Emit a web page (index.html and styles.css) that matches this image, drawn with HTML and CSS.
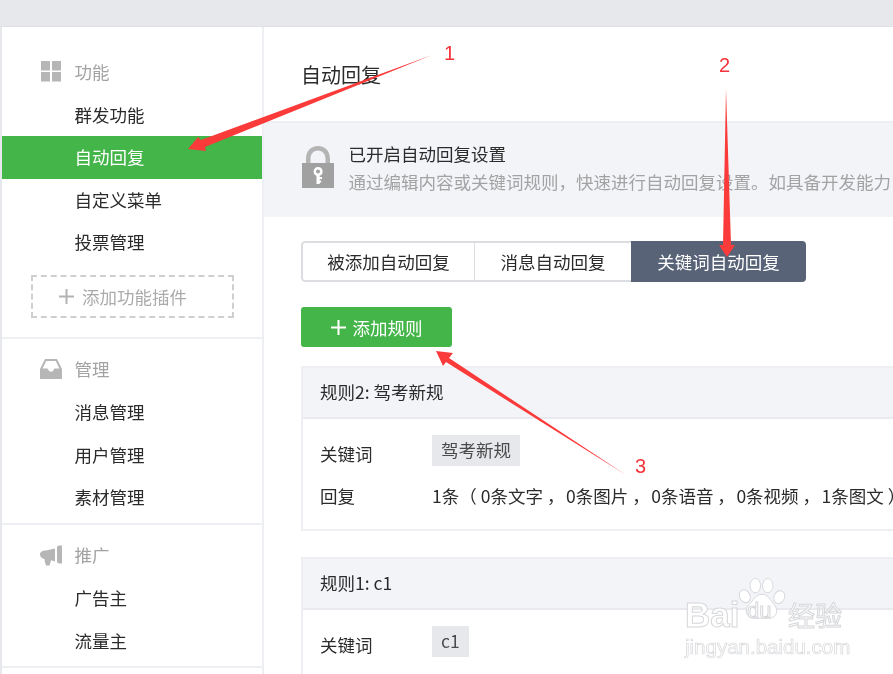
FILE: index.html
```html
<!DOCTYPE html>
<html lang="zh-CN">
<head>
<meta charset="utf-8">
<title>自动回复</title>
<link rel="stylesheet" href="styles.css">
</head>
<body>
<div class="page">
  <div class="topbar"></div>
  <div class="layout">
    <nav class="sidebar">
      <section class="group group-first">
        <div class="group-title">
          <svg class="group-icon" viewBox="0 0 22 22"><path d="M1 1h9v9.500H1zM12 1h9v9.500h-9zM1 12h9v9.500H1zM12 12h9v9.500h-9z"/></svg>
          <span>功能</span>
        </div>
        <a class="item">群发功能</a>
        <a class="item item-active">自动回复</a>
        <a class="item">自定义菜单</a>
        <a class="item">投票管理</a>
        <div class="add-plugin">
          <svg class="add-plus" viewBox="0 0 15 15"><path d="M6.500 0h2v6.500H15v2H8.500V15h-2V8.500H0v-2h6.500z"/></svg>
          <span>添加功能插件</span>
        </div>
      </section>
      <section class="group">
        <div class="group-title">
          <svg class="group-icon" viewBox="0 0 22 22"><path d="M5 1h12l5 10v10H0V11zM6.200 3L2.600 10.500H7.500l2 3h3l2-3h4.900L15.800 3z" fill-rule="evenodd"/></svg>
          <span>管理</span>
        </div>
        <a class="item">消息管理</a>
        <a class="item">用户管理</a>
        <a class="item">素材管理</a>
      </section>
      <section class="group">
        <div class="group-title">
          <svg class="group-icon" viewBox="0 0 22 22"><path d="M17 3.500c0-1.200 1-2 2.500-2h2.500v18h-2.500c-1.500 0-2.500-.8-2.500-2zM15 4.500v13l-4-1.300c-.5 2-1 3.500-1.500 5.300H6c-.8-2-1.200-4-1.500-6.500C2 14.500 0 13 0 10.500S2.500 6.500 6 6.500z"/></svg>
          <span>推广</span>
        </div>
        <a class="item">广告主</a>
        <a class="item">流量主</a>
      </section>
    </nav>
    <main class="main">
      <h1 class="title">自动回复</h1>
      <div class="notice">
        <svg class="lock" viewBox="0 0 32 42">
          <path class="lock-shackle" d="M4 18V13C4 5 9 0 16 0s12 5 12 13v5h-4.500V13c0-5-3-8.500-7.500-8.500S8.500 8 8.500 13v5z"/>
          <path class="lock-body" d="M0 17h32v25H0z"/>
          <path class="lock-key" d="M16 21a4.500 4.500 0 0 1 1.700 8.700V31h2.300v2h-2.300v1.500h1.500v2h-1.500V38h-3.200v-8.300A4.500 4.500 0 0 1 16 21zm0 2.500a2 2 0 1 0 0 4 2 2 0 0 0 0-4z" fill-rule="evenodd"/>
        </svg>
        <div class="notice-text">
          <div class="notice-head">已开启自动回复设置</div>
          <div class="notice-sub">通过编辑内容或关键词规则，快速进行自动回复设置。如具备开发能力</div>
        </div>
      </div>
      <div class="tabs">
        <a class="tab tab-a">被添加自动回复</a>
        <a class="tab tab-b">消息自动回复</a>
        <a class="tab tab-active">关键词自动回复</a>
      </div>
      <button class="add-rule">
        <svg class="add-rule-plus" viewBox="0 0 15 15"><path d="M6.500 0h2v6.500H15v2H8.500V15h-2V8.500H0v-2h6.500z"/></svg>
        <span>添加规则</span>
      </button>
      <article class="card">
        <header class="card-head">规则2: 驾考新规</header>
        <div class="card-body">
          <div class="row row-key"><span class="label">关键词</span><span class="tag">驾考新规</span></div>
          <div class="row"><span class="label">回复</span><span class="value">1条（ <i>0条文字 ，</i><i>0条图片 ，</i><i>0条语音 ，</i><i>0条视频 ，</i><i>1条图文 ）</i></span></div>
        </div>
      </article>
      <article class="card">
        <header class="card-head">规则1: c1</header>
        <div class="card-body">
          <div class="row row-key"><span class="label">关键词</span><span class="tag">c1</span></div>
        </div>
      </article>
    </main>
  </div>

  <svg class="arrows" viewBox="0 0 893 674">
    <path d="M432 55L201 140L198 137L188 149L206 151L205 147Z"/>
    <path d="M726 89L723 245L719 245L727 257L735 245L731 245Z"/>
    <path d="M626 475L449 358L453 353L436 351L443 366L446 362Z"/>
  </svg>
  <span class="num num-1">1</span>
  <span class="num num-2">2</span>
  <span class="num num-3">3</span>

  <div class="watermark">
    <svg class="wm-paw" viewBox="0 0 50 46">
      <ellipse cx="7" cy="19" rx="5.500" ry="7" transform="rotate(-25 7 19)"/>
      <ellipse cx="18" cy="8" rx="5.500" ry="7.500"/>
      <ellipse cx="31" cy="8" rx="5.500" ry="7.500"/>
      <ellipse cx="43" cy="20" rx="5.500" ry="7" transform="rotate(25 43 20)"/>
      <path d="M25 17c7 0 9 7 13 11 5 6 2 14-6 14H17C9 42 6 34 11 28c5-4 7-11 14-11z"/>
    </svg>
    <span class="wm-bai">Bai</span>
    <span class="wm-du">du</span>
    <span class="wm-cn">经验</span>
    <span class="wm-url">jingyan.baidu.com</span>
  </div>
</div>
</body>
</html>
```
FILE: styles.css
```css
* { box-sizing: border-box; }
html, body { margin: 0; padding: 0; }
body {
  background: #e7e8eb;
  font-family: "Noto Sans CJK SC", "Liberation Sans", sans-serif;
  font-size: 17.5px;
  color: #2b2b2b;
  overflow: hidden;
}
.page {
  position: relative;
  width: 893px;
  height: 674px;
  overflow: hidden;
  filter: blur(.4px);
}
.topbar { height: 27px; border-bottom: 1px solid #dfe0e4; }
.layout { display: flex; height: 647px; padding-left: 2px; }

.sidebar {
  flex: none;
  width: 262px;
  background: #fff;
  border-right: 2px solid #eeeff2;
}
.group { padding: 10px 0 4px; border-bottom: 2px solid #eeeff2; }
.group-first { padding: 24px 0 19px; }
.group-title {
  display: flex;
  align-items: center;
  height: 42.500px;
  padding: 0 0 2px 38px;
  color: #a3a3a3;
}
.group-icon { width: 22px; height: 22px; margin-right: 12.500px; fill: #b6b6b6; }
.item {
  display: block;
  height: 42.500px;
  line-height: 42.500px;
  padding-left: 72.500px;
  color: #2b2b2b;
}
.item-active { background: #44b549; color: #fff; }
.add-plugin {
  display: flex;
  align-items: center;
  width: 203px;
  height: 43px;
  margin: 11px 0 0 29px;
  padding-left: 26px;
  border: 2px dashed #cfcfcf;
  color: #ababab;
}
.add-plus { width: 15px; height: 15px; margin-right: 8px; fill: #b3b3b3; }

.main { flex: 1; min-width: 0; background: #fff; overflow: hidden; }
.title {
  margin: 0;
  padding: 33px 0 31px 37px;
  font-size: 20px;
  font-weight: 400;
  line-height: 30px;
  color: #2b2b2b;
}
.notice {
  display: flex;
  height: 96px;
  padding: 23px 0 0 38px;
  background: #f3f4f8;
  border-top: 2px solid #eeeff2;
  white-space: nowrap;
}
.lock { flex: none; width: 32px; height: 42px; margin-right: 14.500px; }
.lock-shackle { fill: #b4b4b4; }
.lock-body { fill: #a1a1a1; }
.lock-key { fill: #fff; }
.notice-text { margin-top: -5px; }
.notice-head { line-height: 26px; color: #2b2b2b; }
.notice-sub { margin-top: 2px; line-height: 26px; color: #a3a3a3; }

.tabs {
  display: flex;
  width: 505px;
  height: 41px;
  margin: 24px 0 0 37px;
  border-radius: 4px;
  overflow: hidden;
}
.tab {
  display: flex;
  align-items: center;
  justify-content: center;
  color: #2b2b2b;
  border: solid #dcdde1;
  border-width: 2px 0;
}
.tab-a { width: 174px; border-width: 2px 1px 2px 2px; border-radius: 4px 0 0 4px; }
.tab-b { width: 156px; }
.tab-active {
  flex: 1;
  border: 0;
  background: #596377;
  color: #fff;
}
.add-rule {
  display: flex;
  align-items: center;
  justify-content: center;
  width: 151px;
  height: 40px;
  margin: 25px 0 0 37px;
  padding: 0;
  border: 0;
  border-radius: 3px;
  background: #44b549;
  color: #fff;
  font: inherit;
}
.add-rule-plus { width: 15px; height: 15px; margin-right: 7px; fill: #fff; }

.card {
  width: 700px;
  margin: 19px 0 0 37px;
  border: 2px solid #eeeff2;
  border-right: 0;
}
.card + .card { margin-top: 26px; }
.card-head {
  height: 51px;
  padding-left: 17px;
  line-height: 48px;
  background: #f3f4f8;
  border-bottom: 2px solid #e9eaee;
  color: #2b2b2b;
}
.card-body { padding: 16px 0 17px 17px; }
.row { display: flex; min-height: 31px; line-height: 29px; margin-bottom: 11px; }
.row:last-child { margin-bottom: 0; }
.row-key { min-height: 35px; }
.label { flex: none; width: 112px; }
.row-key .label { padding-top: 4px; }
.tag {
  align-self: flex-start;
  height: 31px;
  padding: 0 9px;
  background: #e7e8ec;
  color: #4a4a4a;
}
.value { white-space: nowrap; color: #2b2b2b; }
.value i { font-style: normal; display: inline-block; width: 85px; margin-left: .2px; }

.arrows { position: absolute; inset: 0; width: 893px; height: 674px; fill: #fb3a3a; pointer-events: none; }
.num { position: absolute; font-family: "Liberation Sans", sans-serif; font-size: 20px; line-height: 24px; color: #f5333a; }
.num-1 { left: 444px; top: 41px; }
.num-2 { left: 719px; top: 53px; }
.num-3 { left: 635px; top: 454px; }

.watermark { position: absolute; left: 685px; top: 578px; width: 160px; height: 80px; pointer-events: none; }
.wm-paw { position: absolute; left: 53px; top: 0; width: 48px; height: 44px; fill: #fff; stroke: #d6d7da; stroke-width: 1; }
.wm-bai, .wm-du, .wm-cn, .wm-url {
  position: absolute;
  font-family: "Liberation Sans", sans-serif;
  color: #fff;
  -webkit-text-stroke: 1px #d6d7da;
  white-space: nowrap;
}
.wm-bai { left: 0; top: 19px; font-size: 35px; line-height: 36px; font-weight: 700; }
.wm-du { left: 62px; top: 21px; font-size: 22px; line-height: 24px; }
.wm-cn { left: 103px; top: 22px; font-family: "Noto Sans CJK SC", sans-serif; font-size: 27px; line-height: 30px; }
.wm-url { left: 0; top: 57px; font-size: 20.500px; line-height: 24px; -webkit-text-stroke-width: .7px; }
```
